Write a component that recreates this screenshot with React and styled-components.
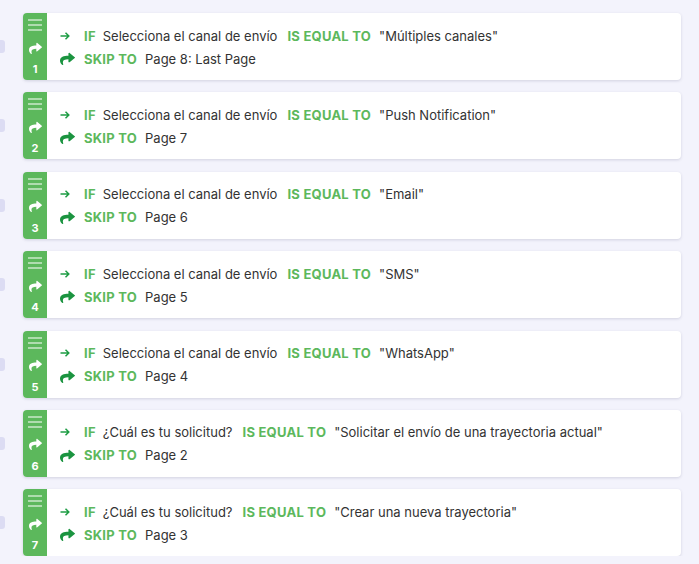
import styled, { createGlobalStyle } from "styled-components";

const GlobalStyle = createGlobalStyle`
    html, body {
        margin: 0;
        padding: 0;
        background: #f3f3fc;
        font-family: Inter, "Noto Sans", sans-serif;
    }
`;

const rules = [
    { question: "Selecciona el canal de envío", value: "Múltiples canales", page: "Page 8: Last Page" },
    { question: "Selecciona el canal de envío", value: "Push Notification", page: "Page 7" },
    { question: "Selecciona el canal de envío", value: "Email", page: "Page 6" },
    { question: "Selecciona el canal de envío", value: "SMS", page: "Page 5" },
    { question: "Selecciona el canal de envío", value: "WhatsApp", page: "Page 4" },
    { question: "¿Cuál es tu solicitud?", value: "Solicitar el envío de una trayectoria actual", page: "Page 2" },
    { question: "¿Cuál es tu solicitud?", value: "Crear una nueva trayectoria", page: "Page 3" },
];

const ShareIcon = ({ width = 14, height = 12, color = "#fff" }) => (
    <svg width={width} height={height} viewBox="0 0 512 480" fill={color} preserveAspectRatio="none">
        <path d="M503.7 189.8L327.7 37.9C312.3 24.6 288 35.4 288 56v80C127.4 137.8 0 170.1 0 322.8c0 61.6 39.7 122.7 83.6 154.6 13.7 10 33.2-2.5 28.2-18.7C66.3 312.1 131.6 270.1 288 267.8V356c0 20.7 24.3 31.4 39.7 18.2l176-152c11.1-9.6 11.1-26.8 0-36.4z" />
    </svg>
);

const RuleList = () => (
    <StyledList>
        {rules.map((rule, i) => (
            <StyledRow key={i}>
                <StyledTab />
                <StyledCard>
                    <StyledStrip>
                        <StyledHandle>
                            <span />
                            <span />
                            <span />
                        </StyledHandle>
                        <ShareIcon width={13} height={12} />
                        <StyledNumber>{i + 1}</StyledNumber>
                    </StyledStrip>
                    <StyledBody>
                        <StyledLine>
                            <StyledIcon>
                                <svg width="10" height="8" viewBox="0 0 10 8" fill="none" stroke="#1f9d45" strokeWidth="1.5">
                                    <path d="M0.5 4h8.5M5.5 0.8L8.8 4 5.5 7.2" />
                                </svg>
                            </StyledIcon>
                            <StyledKey $after="7px">IF</StyledKey>
                            <StyledText>{rule.question}</StyledText>
                            <StyledKey $before="10px">IS EQUAL TO</StyledKey>
                            <StyledText>"{rule.value}"</StyledText>
                        </StyledLine>
                        <StyledLine>
                            <StyledIcon>
                                <ShareIcon width={15} height={13} color="#1b9440" />
                            </StyledIcon>
                            <StyledKey>SKIP TO</StyledKey>
                            <StyledText>{rule.page}</StyledText>
                        </StyledLine>
                    </StyledBody>
                </StyledCard>
            </StyledRow>
        ))}
    </StyledList>
);

const StyledList = styled.div`
    display: flex;
    flex-direction: column;
    gap: 12.4px;
    padding: 13px 18px 0 0;
    width: 681px;
`;

const StyledRow = styled.div`
    display: flex;
    align-items: center;
`;

const StyledTab = styled.div`
    width: 5px;
    height: 13px;
    margin-right: 18px;
    border-radius: 0 3px 3px 0;
    background: #dcdcf3;
`;

const StyledCard = styled.div`
    flex: 1;
    display: flex;
    height: 67px;
    background: #fff;
    border-radius: 4px;
    box-shadow: 0 1px 3px rgba(60, 60, 100, 0.18);
    overflow: hidden;
`;

const StyledStrip = styled.div`
    width: 24px;
    display: flex;
    flex-direction: column;
    align-items: center;
    justify-content: space-between;
    padding: 6px 0 5px;
    box-sizing: border-box;
    background: #5cb85c;
    color: #fff;
`;

const StyledHandle = styled.div`
    display: flex;
    flex-direction: column;
    gap: 3px;

    span {
        width: 14px;
        height: 2px;
        background: rgba(255, 255, 255, 0.5);
    }
`;

const StyledNumber = styled.div`
    font-size: 11px;
    font-weight: 700;
    line-height: 11px;
`;

const StyledBody = styled.div`
    display: flex;
    flex-direction: column;
    justify-content: center;
    padding: 1px 0 0 13px;
    gap: 1px;
`;

const StyledLine = styled.div`
    display: flex;
    align-items: center;
    height: 22px;
    font-size: 13px;
    color: #333;
    white-space: nowrap;
`;

const StyledIcon = styled.span`
    width: 24px;
    display: flex;
    align-items: center;
`;

const StyledKey = styled.b`
    font-weight: 700;
    color: #5cb85c;
    letter-spacing: 0.25px;
    margin: 0 ${(p) => p.$after || "8px"} 0 ${(p) => p.$before || "0"};
`;

const StyledText = styled.span``;

export default function App() {
    return (
        <>
            <GlobalStyle />
            <RuleList />
        </>
    );
}
